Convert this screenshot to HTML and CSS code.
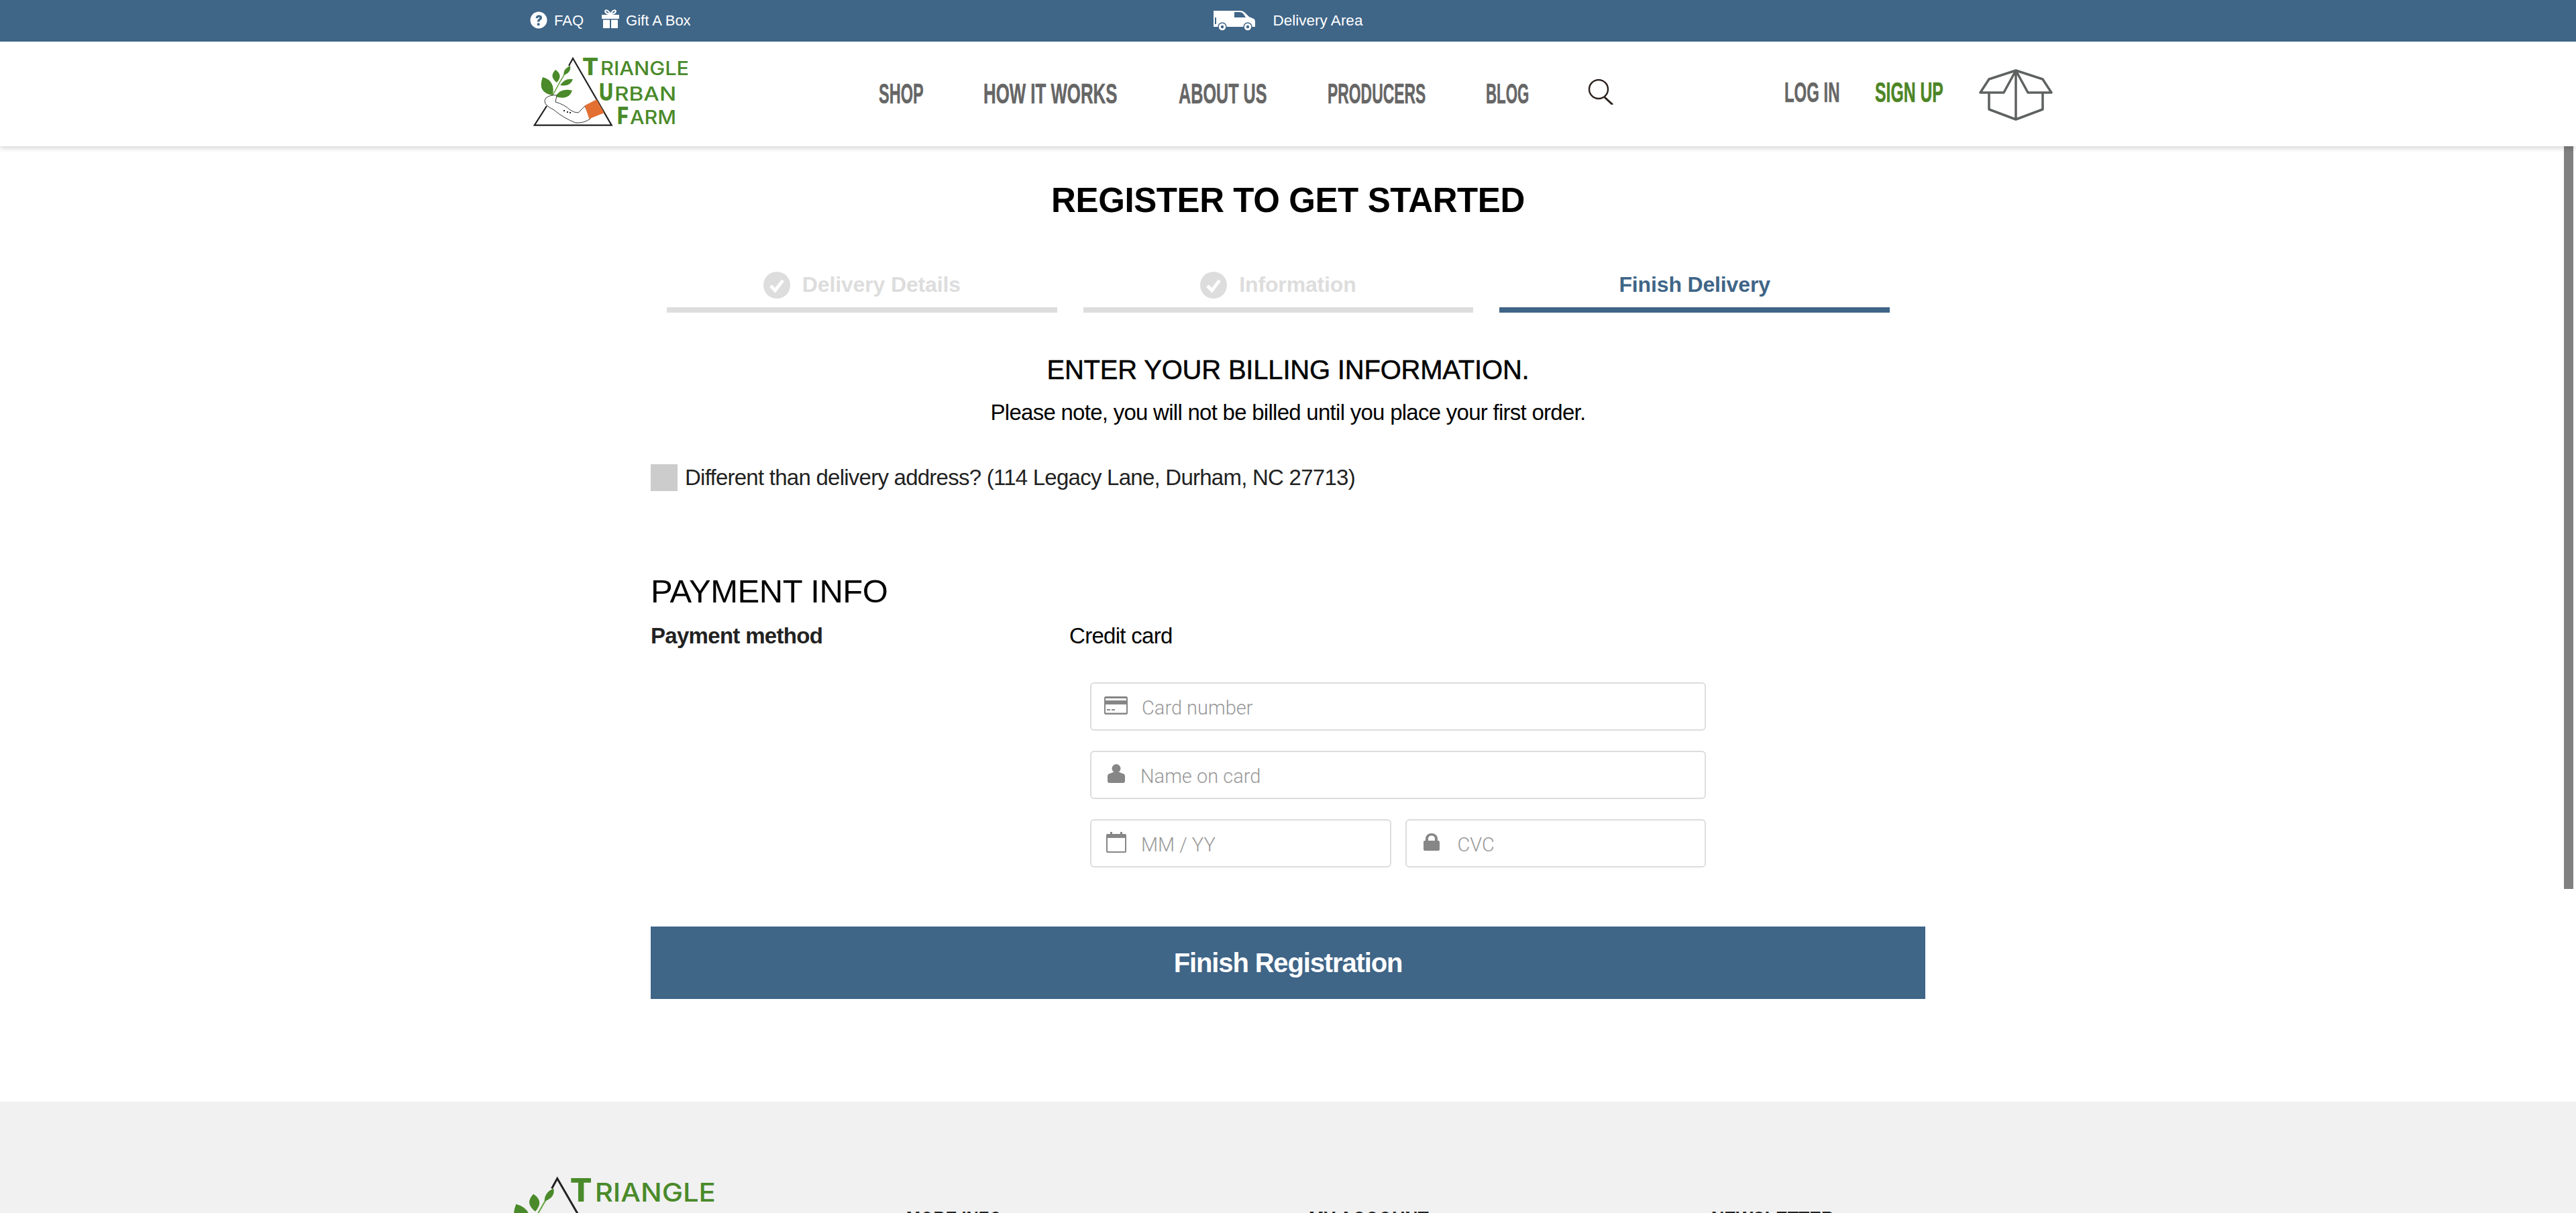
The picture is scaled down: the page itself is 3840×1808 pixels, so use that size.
FILE: index.html
```html
<!DOCTYPE html>
<html lang="en">
<head>
<meta charset="utf-8">
<title>Register to get started</title>
<link rel="stylesheet" href="styles.css">
</head>
<body>
<div class="topbar">
  <div class="top-links">
    <a class="top-link">
      <svg class="ico-faq" viewBox="0 0 26 26"><circle cx="13" cy="13" r="12.500" fill="#fff"/><path d="M8.500 10q.5-4.500 4.800-4.500 4.700 0 4.700 4 0 2.300-2.400 3.600-1.300.8-1.300 2.400h-3.400q0-3 2-4.300 1.500-1 1.500-1.800 0-1-1.100-1-1.200 0-1.600 1.800z" fill="#3f6587"/><rect x="10.800" y="17.500" width="3.600" height="3.500" fill="#3f6587"/></svg>
      FAQ
    </a>
    <a class="top-link">
      <svg class="ico-gift" viewBox="0 0 28 30"><path d="M1 9h26v6H1zM3 16.500h10V29H3zM15 16.500h10V29H15z" fill="#fff"/><path d="M14 8C11 3 9 1.500 7 2.500 5 4 6.500 8 14 8ZM14 8c3-5 5-6.500 7-5.500C23 4 21.500 8 14 8Z" fill="none" stroke="#fff" stroke-width="2.200"/></svg>
      Gift A Box
    </a>
  </div>
  <a class="top-link delivery">
    <svg class="ico-van" viewBox="0 0 64 30"><path d="M0 0H40Q44 0 48 4L53 9 60 12Q62 13 62 17V24H0Z" fill="#fff"/><path d="M31 2H39Q42 2 44 4L48 10H31Z" fill="#3f6587"/><rect x="2" y="10" width="2" height="10" fill="#3f6587"/><circle cx="13" cy="24" r="6" fill="#fff" stroke="#3f6587" stroke-width="1.500"/><circle cx="51" cy="24" r="6" fill="#fff" stroke="#3f6587" stroke-width="1.500"/><circle cx="13" cy="24" r="2.200" fill="#3f6587"/><circle cx="51" cy="24" r="2.200" fill="#3f6587"/></svg>
    Delivery Area
  </a>
</div>

<header class="site-header">
  <svg class="logo" viewBox="0 0 250 115">
    <path d="M58 18 64 7 121.700 106.700H6.700L25 78" fill="none" stroke="#222" stroke-width="2.200"/>
    <path d="M33 64Q44 42 58 20" fill="none" stroke="#6aa544" stroke-width="1.500"/>
    <path d="M50 32Q50 22 60 18Q62 28 50 32Z" fill="#4a8a2a"/>
    <path d="M40 43Q28 34 38 24Q50 32 40 43Z" fill="#4a8a2a"/>
    <path d="M34 62Q10 58 19 35Q38 40 34 62Z" fill="#4a8a2a"/>
    <path d="M45 47Q52 36 64 38Q60 50 45 47Z" fill="#4a8a2a"/>
    <path d="M38 64Q46 50 63 55Q58 70 38 64Z" fill="#4a8a2a"/>
    <path d="M24 76Q20 70 24 66 30 61 40 62L38 72Q52 76 60 84 66 88 72 88L82 78 90 97Q80 104 68 103 50 96 36 84 28 80 24 76Z" fill="#fff" stroke="#222" stroke-width=".9"/>
    <path d="M81.700 77.300 99.300 68.300 110.700 88.300 88.300 97.300Z" fill="#e37033"/>
    <path d="M50 85h2M55 87h2M59 88h2" stroke="#222" stroke-width="2"/>
    <g class="logo-text">
      <text class="logo-big" x="78" y="32" textLength="24" lengthAdjust="spacingAndGlyphs">T</text>
      <text class="logo-small" x="105" y="32" textLength="132" lengthAdjust="spacingAndGlyphs">RIANGLE</text>
      <text class="logo-big" x="103" y="70" textLength="21" lengthAdjust="spacingAndGlyphs">U</text>
      <text class="logo-small" x="126" y="70" textLength="92" lengthAdjust="spacingAndGlyphs">RBAN</text>
      <text class="logo-big" x="130" y="105" textLength="17" lengthAdjust="spacingAndGlyphs">F</text>
      <text class="logo-small" x="149" y="105" textLength="69" lengthAdjust="spacingAndGlyphs">ARM</text>
    </g>
  </svg>
  <nav class="main-nav">
    <a class="cond nav-shop"><span>SHOP</span></a>
    <a class="cond nav-how"><span>HOW IT WORKS</span></a>
    <a class="cond nav-about"><span>ABOUT US</span></a>
    <a class="cond nav-prod"><span>PRODUCERS</span></a>
    <a class="cond nav-blog"><span>BLOG</span></a>
    <svg class="ico-search" viewBox="0 0 38 38"><circle cx="16" cy="15" r="14" fill="none" stroke="#2b201c" stroke-width="2.400"/><path d="M25 27 37 38" stroke="#2b201c" stroke-width="3"/></svg>
  </nav>
  <div class="account">
    <a class="cond nav-login"><span>LOG IN</span></a>
    <a class="cond nav-signup"><span>SIGN UP</span></a>
    <svg class="ico-box" viewBox="0 0 110 78"><path d="M55 2V75M55 2 15 15 2 35H37L55 2 73 35H108L95 15 55 2M15 35V60L55 75 95 60V35" fill="none" stroke="#5d625f" stroke-width="3.500" stroke-linejoin="round" stroke-linecap="round"/></svg>
  </div>
</header>

<main class="content">
  <h1 class="title">REGISTER TO GET STARTED</h1>
  <ol class="steps">
    <li class="step done">
      <svg class="ico-check" viewBox="0 0 40 40"><circle cx="20" cy="20" r="20" fill="#ddd"/><path d="M11 21l6.500 7L29 13" fill="none" stroke="#fff" stroke-width="5"/></svg>
      Delivery Details
    </li>
    <li class="step done">
      <svg class="ico-check" viewBox="0 0 40 40"><circle cx="20" cy="20" r="20" fill="#ddd"/><path d="M11 21l6.500 7L29 13" fill="none" stroke="#fff" stroke-width="5"/></svg>
      Information
    </li>
    <li class="step active">Finish Delivery</li>
  </ol>

  <h2 class="billing-title">ENTER YOUR BILLING INFORMATION.</h2>
  <p class="billing-note">Please note, you will not be billed until you place your first order.</p>

  <label class="check-row">
    <span class="checkbox"></span>
    Different than delivery address? (114 Legacy Lane, Durham, NC 27713)
  </label>

  <h2 class="payment-title">PAYMENT INFO</h2>
  <div class="method-row">
    <strong class="method-label">Payment method</strong>
    <span class="method-value">Credit card</span>
  </div>

  <form class="card-form">
    <div class="field">
      <svg class="ico-card" viewBox="0 0 35 27"><path d="M2.500 0h30A2.500 2.500 0 0 1 35 2.500v22a2.500 2.500 0 0 1-2.500 2.500h-30A2.500 2.500 0 0 1 0 24.500v-22A2.500 2.500 0 0 1 2.500 0ZM2 3v3h31V3ZM2 12v12.500h31V12ZM4 19h5v2H4ZM11 19h5v2h-5Z" fill="#868686" fill-rule="evenodd"/></svg>
      <input class="field-input" placeholder="Card number">
    </div>
    <div class="field">
      <svg class="ico-person" viewBox="0 0 26 28"><circle cx="13" cy="6.500" r="6.500" fill="#868686"/><path d="M0 25V18q0-4 5-4.500L8 12h10l3 1.500q5 .5 5 4.500v7q0 3-3 3H3q-3 0-3-3Z" fill="#868686"/></svg>
      <input class="field-input" placeholder="Name on card">
    </div>
    <div class="field-row">
      <div class="field">
        <svg class="ico-cal" viewBox="0 0 30 32"><path d="M2 4h4V1h3v3h12V1h3v3h4a2 2 0 0 1 2 2v24a2 2 0 0 1-2 2H2a2 2 0 0 1-2-2V6a2 2 0 0 1 2-2ZM2 10v20h26V10Z" fill="#868686" fill-rule="evenodd"/></svg>
        <input class="field-input" placeholder="MM / YY">
      </div>
      <div class="field">
        <svg class="ico-lock" viewBox="0 0 24 26"><path d="M3 11V8a9 8 0 0 1 18 0v3h1a2 2 0 0 1 2 2v11a2 2 0 0 1-2 2H2a2 2 0 0 1-2-2V13a2 2 0 0 1 2-2ZM7 11h10V8a5 4.500 0 0 0-10 0Z" fill="#868686" fill-rule="evenodd"/></svg>
        <input class="field-input" placeholder="CVC">
      </div>
    </div>
  </form>

  <button class="finish" type="button">Finish Registration</button>
</main>

<footer class="site-footer">
  <svg class="footer-logo" viewBox="0 0 250 115">
    <path d="M58 18 64 7 121.700 106.700H6.700L25 78" fill="none" stroke="#222" stroke-width="2.200"/>
    <path d="M33 64Q44 42 58 20" fill="none" stroke="#6aa544" stroke-width="1.500"/>
    <path d="M50 32Q50 22 60 18Q62 28 50 32Z" fill="#4a8a2a"/>
    <path d="M40 43Q28 34 38 24Q50 32 40 43Z" fill="#4a8a2a"/>
    <path d="M34 62Q10 58 19 35Q38 40 34 62Z" fill="#4a8a2a"/>
    <g class="logo-text">
      <text class="logo-big" x="78" y="32" textLength="24" lengthAdjust="spacingAndGlyphs">T</text>
      <text class="logo-small" x="105" y="32" textLength="132" lengthAdjust="spacingAndGlyphs">RIANGLE</text>
    </g>
  </svg>
  <div class="footer-col"><h3 class="cond-foot"><span class="foot-more">MORE INFO</span></h3></div>
  <div class="footer-col"><h3 class="cond-foot"><span class="foot-wide">MY ACCOUNT</span></h3></div>
  <div class="footer-col"><h3 class="cond-foot"><span class="foot-wide">NEWSLETTER</span></h3></div>
</footer>

<div class="scrollbar"></div>
</body>
</html>
```
FILE: styles.css
```css
* { box-sizing: border-box; }
html, body { margin: 0; height: 100%; overflow: hidden; background: #fff; }
body { font-family: "Liberation Sans", Arial, sans-serif; color: #000; position: relative; }

.topbar {
  height: 62px; background: #3f6587; color: #fff; display: grid;
  grid-template-columns: 1fr auto 1fr; align-items: center; padding-left: 790px; font-size: 22px;
}
.top-links { display: flex; gap: 26px; }
.top-link { display: flex; align-items: center; gap: 9px; white-space: nowrap; }
.delivery { grid-column: 2; gap: 25px; margin-right: 790px; font-size: 22.500px; }
.ico-faq { width: 26px; height: 26px; margin: -3px 1px 0 0; }
.ico-gift { width: 28px; height: 30px; margin-top: -6px; }
.ico-van { width: 64px; height: 30px; }

.site-header {
  height: 156px; display: flex; align-items: center; padding-left: 790px; position: relative; z-index: 2;
  background: #fff; box-shadow: 0 3px 7px rgba(0,0,0,.16);
}
.logo { width: 250px; height: 115px; margin-top: -5px; flex: none; overflow: visible; }
.logo-text { fill: #4a8a2a; font-family: Inter, "Liberation Sans", sans-serif; }
.logo-big { font-size: 35px; font-weight: 800; }
.logo-small { font-size: 28px; font-weight: 500; }
.main-nav { display: flex; align-items: center; gap: 89px; margin-left: 270px; }
.cond, .cond-foot { display: block; font-family: "Liberation Sans", sans-serif; font-weight: 700; white-space: nowrap; }
.cond { font-size: 42px; color: #666; height: 48px; line-height: 48px; -webkit-text-stroke: .6px currentColor; }
.cond span, .cond-foot span { display: inline-block; transform-origin: left center; }
.nav-shop { width: 67px; }
.nav-shop span { transform: scaleX(.56); }
.nav-how { width: 202px; }
.nav-how span { transform: scaleX(.615); }
.nav-about { width: 133px; }
.nav-about span { transform: scaleX(.6); }
.nav-prod { width: 147px; }
.nav-prod span { transform: scaleX(.545); }
.nav-blog { width: 65px; }
.nav-blog span { transform: scaleX(.53); }
.ico-search { width: 38px; height: 38px; margin: -6px 0 0 -2px; }
.account { display: flex; align-items: center; gap: 53px; position: absolute; left: 2660px; top: 36px; }
.nav-login { width: 82px; margin-top: -3px; }
.nav-login span { transform: scaleX(.57); }
.nav-signup { width: 102px; color: #4d8526; margin-top: -3px; }
.nav-signup span { transform: scaleX(.59); }
.ico-box { width: 110px; height: 78px; margin-top: 5px; flex: none; }

.content { width: 1900px; margin: 0 auto; display: flex; flex-direction: column; }
.title { margin: 53px 0 0; text-align: center; font-size: 51px; line-height: 56px; font-weight: 700; letter-spacing: -.4px; }
.steps { list-style: none; margin: 80px 53px 0 24px; padding: 0; display: grid; grid-template-columns: repeat(3, 1fr); gap: 39px; }
.step {
  height: 59px; display: flex; align-items: center; justify-content: center; gap: 18px;
  border-bottom: 8px solid #ddd; color: #ddd; font-size: 32px; font-weight: 700; padding-bottom: 16px; letter-spacing: -.15px;
}
.step.active { color: #3f6587; border-color: #3f6587; }
.ico-check { width: 40px; height: 40px; }
.billing-title { margin: 63px 0 0; text-align: center; font-size: 40px; line-height: 44px; font-weight: 400; -webkit-text-stroke: .5px #000; letter-spacing: -.2px; }
.billing-note { margin: 22px 0 0; text-align: center; font-size: 33px; line-height: 40px; letter-spacing: -.73px; }
.check-row { display: flex; align-items: center; gap: 11px; margin-top: 57px; font-size: 33px; color: #222; letter-spacing: -.75px; }
.checkbox { width: 40px; height: 40px; background: #ccc; flex: none; }
.payment-title { margin: 121px 0 0; font-size: 49px; line-height: 56px; font-weight: 400; letter-spacing: -.5px; }
.method-row { display: flex; margin-top: 19px; font-size: 33px; line-height: 40px; letter-spacing: -.7px; }
.method-label { width: 624px; color: #222; }
.card-form { width: 918px; margin: 49px 0 0 655px; display: flex; flex-direction: column; gap: 30px; }
.field {
  height: 72px; display: flex; align-items: center; border: 2px solid #ddd; border-radius: 6px; padding-left: 19px; flex: none;
}
.field svg { flex: none; margin-top: -4px; }
.field-row { display: flex; gap: 21px; }
.field-row .field { flex: 1; min-width: 0; }
.field-input { flex: 1; min-width: 0; border: 0; outline: 0; padding: 3px 0 0; background: none; font: 300 29px Roboto, "Liberation Sans", sans-serif; }
.field-input::placeholder { color: #999; opacity: 1; }
.ico-card { width: 35px; height: 27px; margin-right: 21px; }
.ico-person { width: 26px; height: 28px; margin: 0 23px 0 5px; }
.ico-cal { width: 30px; height: 32px; margin: 0 22px 0 3px; }
.ico-lock { width: 24px; height: 26px; margin: 0 27px 0 6px; }
.finish {
  margin-top: 88px; height: 108px; border: 0; background: #3f6587; color: #fff; font: 700 40px "Liberation Sans", Arial, sans-serif; letter-spacing: -1.15px;
}

.site-footer { margin-top: 153px; background: #f1f1f1; height: 400px; display: flex; padding: 105px 0 0 743px; }
.footer-logo { width: 342px; height: 157px; margin-right: 266px; flex: none; }
.footer-col { width: 600px; padding-top: 50px; }
.cond-foot { margin: 0; font-size: 40px; line-height: 46px; color: #222; }
.foot-more { transform: scaleX(.63); }
.foot-wide { transform: scaleX(.665); }

.scrollbar { position: absolute; right: 4px; top: 218px; width: 14px; height: 1107px; background: #808080; }
```
